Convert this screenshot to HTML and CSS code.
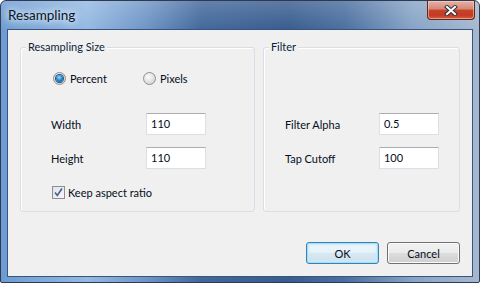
FILE: index.html
```html
<!DOCTYPE html>
<html lang="en">
<head>
	<meta charset="UTF-8">
	<title>Resampling</title>
	<link rel="stylesheet" href="styles.css">
</head>
<body>
	<div class="window">
		<div class="titlebar">
			<span class="title">Resampling</span>
			<button class="close" aria-label="Close">
				<svg width="14" height="11" viewBox="0 0 14 11">
					<path d="M3 2 L11 9 M11 2 L3 9" stroke="#2c3440" stroke-width="4" stroke-linecap="square"/>
					<path d="M3 2 L11 9 M11 2 L3 9" stroke="#fff" stroke-width="2" stroke-linecap="square"/>
				</svg>
			</button>
		</div>

		<div class="client">
			<div class="groups">
				<div class="group group-size">
					<span class="legend">Resampling Size</span>
					<div class="radios">
						<label class="radio"><span class="dot on"></span>Percent</label>
						<label class="radio"><span class="dot"></span>Pixels</label>
					</div>
					<div class="field first"><span class="field-label">Width</span><span class="edit">110</span></div>
					<div class="field"><span class="field-label">Height</span><span class="edit">110</span></div>
					<label class="check">
						<span class="box">
							<svg width="11" height="11" viewBox="0 0 11 11"><path d="M2 5.5 L4.3 8.5 L9 1.5" fill="none" stroke="#4a6190" stroke-width="1.6"/></svg>
						</span>Keep aspect ratio
					</label>
				</div>

				<div class="group group-filter">
					<span class="legend">Filter</span>
					<div class="field"><span class="field-label">Filter Alpha</span><span class="edit">0.5</span></div>
					<div class="field"><span class="field-label">Tap Cutoff</span><span class="edit">100</span></div>
				</div>
			</div>

			<div class="buttons">
				<button class="btn default">OK</button>
				<button class="btn">Cancel</button>
			</div>
		</div>
	</div>
</body>
</html>
```

FILE: styles.css
```css
body{ margin:0; padding:0; font-family:Lato,"Noto Sans",sans-serif; font-size:11px; color:#050d1a;}
.window{ width:480px; height:283px; box-sizing:border-box; border:1px solid #2c3b52; border-radius:6px 6px 2px 2px; padding:0 7px 6px 7px; display:flex; flex-direction:column;
	background:linear-gradient(180deg, rgba(255,255,255,0.18), rgba(255,255,255,0) 30px),
		linear-gradient(90deg, #6d9bd1 0%, #94b9e2 18%, #6f96c7 30%, #41679b 42%, #385c8f 60%, #4a6f9f 72%, #86a3c6 86%, #a6b8ce 100%);}

.titlebar{ height:29px; display:flex; justify-content:space-between; align-items:flex-start;}
.title{ font-size:13.5px; line-height:14px; margin-top:7px; color:#0b1526; text-shadow:0 0 6px #e8f1fb, 0 0 10px #d5e5f6, 0 0 14px #c4d9f0;}
.close{ width:48px; height:19px; margin:0 -3px 0 0; padding:0; border:1px solid #5a2a22; border-top:none; border-radius:0 0 4px 4px; display:flex; align-items:center; justify-content:center;
	background:linear-gradient(180deg, #e6b1a6 0%, #d48875 45%, #c5432c 50%, #c63a22 80%, #d8603f 100%); box-shadow:inset 0 0 0 1px rgba(255,220,210,0.5);}

.client{ flex:1; background:#f0f0f0; box-shadow:0 0 0 1px #3a557d; padding:17px 12px 0 12px;}
.groups{ display:flex; gap:8px;}
.group{ position:relative; height:165px; box-sizing:border-box; border:1px solid #d5dfe5; border-radius:3px; box-shadow:inset 1px 1px 0 #fff;}
.group-size{ width:236px; padding:22px 0 0 30px;}
.group-filter{ width:198px; padding:65px 0 0 21px;}
.legend{ position:absolute; left:5px; top:-9px; padding:0 2px; line-height:16px; background:#f0f0f0; color:#0c1d38;}

.radios{ display:flex; height:16px; align-items:center; margin-left:2px;}
.radio{ display:flex; align-items:center; width:90px;}
.dot{ width:11px; height:11px; border:1px solid #8e8f8f; border-radius:50%; margin-right:4px; position:relative; background:radial-gradient(circle at 40% 35%, #fcfcfc, #d9d9d9 70%, #c8c8c8);}
.dot.on::after{ content:""; position:absolute; left:2px; top:2px; width:7px; height:7px; border-radius:50%; background:radial-gradient(circle at 45% 35%, #a8dcf8 0%, #2b8ad0 45%, #0a4c8a 100%); box-shadow:0 0 0 1px #1b4f7f;}

.field{ display:flex; align-items:center; height:22px; margin-top:12px;}
.field.first{ margin-top:27px;}
.group-size .field-label{ width:95px;}
.group-filter .field-label{ width:94px;}
.edit{ width:60px; height:22px; box-sizing:border-box; background:#fff; border:1px solid #dbdfe6; border-top-color:#abadb3; padding:0 0 2px 4px; display:flex; align-items:center;}
.group-filter .field:first-of-type{ margin-top:0;}

.check{ display:flex; align-items:center; height:16px; margin:15px 0 0 1px;}
.box{ width:11px; height:11px; border:1px solid #8e8f8f; margin-right:3px; display:flex; align-items:center; justify-content:center; background:linear-gradient(135deg, #dfe3ea, #f6f7f9);}

.buttons{ display:flex; justify-content:flex-end; gap:8px; margin-top:30px;}
.btn{ width:73px; height:22px; font:inherit; color:#050d1a; padding:0; border:1px solid #707070; border-radius:3px;
	background:linear-gradient(180deg, #f2f2f2 0%, #ebebeb 50%, #dddddd 51%, #cfcfcf 100%); box-shadow:inset 0 0 0 1px #fbfbfb;}
.btn.default{ border-color:#3c7fb1; box-shadow:inset 0 0 0 1px #9fe0f7, inset 0 0 2px 2px #c7ecfa;
	background:linear-gradient(180deg, #eef6fb 0%, #e6f1f8 50%, #d5e8f3 51%, #cfe2ee 100%);}
```
